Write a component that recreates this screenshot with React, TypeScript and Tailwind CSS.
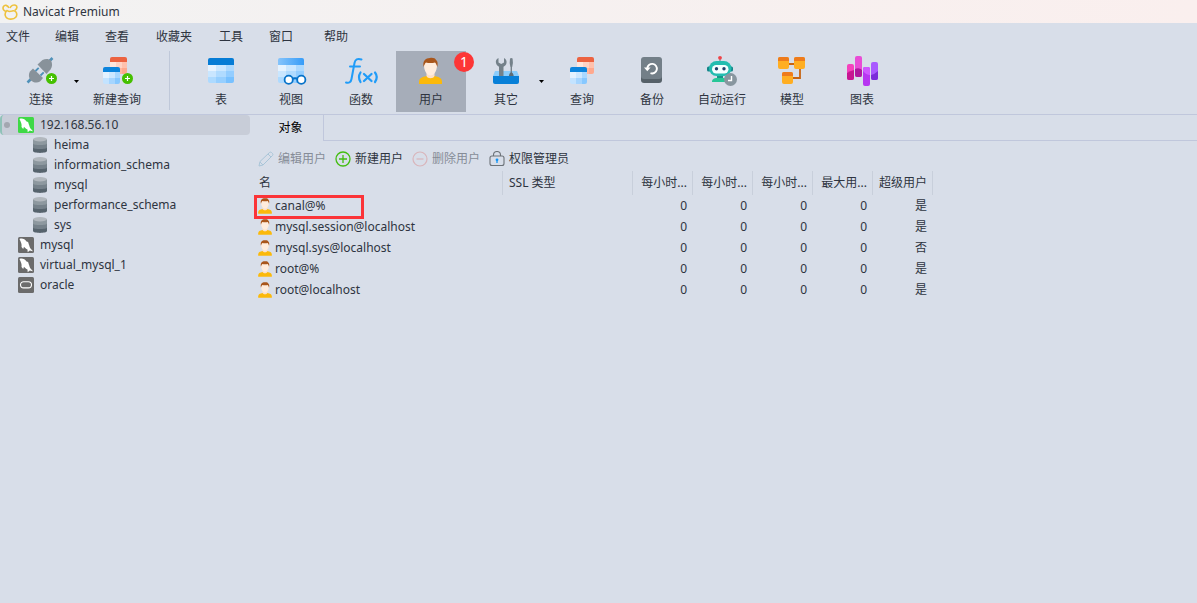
import React, { useState } from "react";
import type { ReactNode } from "react";

function MiniTable({ x, y, tone }: { x: number; y: number; tone: "red" | "blue" }) {
  const red = tone === "red";
  const cells = red
    ? ["#ffe6dd", "#ffd3c5", "#ffc1ad", "#ffd3c5", "#ffb7a0", "#ffa98e"]
    : ["#e3f2ff", "#cde8ff", "#a9d8ff", "#c3e3ff", "#a5d5ff", "#87c8ff"];
  return (
    <g transform={`translate(${x} ${y})`}>
      <path d="M0 5V2a2 2 0 0 1 2-2h13a2 2 0 0 1 2 2v3z" fill={red ? "#ec6341" : "#0c84dc"} />
      <path d="M0 5h6v6H0z" fill={cells[0]} />
      <path d="M6 5h6v6H6z" fill={cells[1]} />
      <path d="M12 5h5v6h-5z" fill={cells[2]} />
      <path d="M0 11h6v6H2a2 2 0 0 1-2-2z" fill={cells[3]} />
      <path d="M6 11h6v6H6z" fill={cells[4]} />
      <path d="M12 11h5v4a2 2 0 0 1-2 2h-3z" fill={cells[5]} />
    </g>
  );
}

function BigTable({ header }: { header: string }) {
  return (
    <g>
      <path d="M7 11V6a2 2 0 0 1 2-2h22a2 2 0 0 1 2 2v5z" fill={header} />
      <path d="M7 11h8v6H7z" fill="#e6f3ff" />
      <path d="M15 11h10v6H15z" fill="#cbe7ff" />
      <path d="M25 11h8v6h-8z" fill="#acd9ff" />
      <path d="M7 17h8v6H7z" fill="#c9e6ff" />
      <path d="M15 17h10v6H15z" fill="#b0dbff" />
      <path d="M25 17h8v6h-8z" fill="#93cdff" />
      <path d="M7 23h8v6H9a2 2 0 0 1-2-2z" fill="#addaff" />
      <path d="M15 23h10v6H15z" fill="#96cfff" />
      <path d="M25 23h8v4a2 2 0 0 1-2 2h-6z" fill="#78c1ff" />
    </g>
  );
}

function PlusBadge() {
  return (
    <g>
      <circle cx="30.5" cy="24.5" r="5.5" fill="#45c000" />
      <path d="M30.5 22v5M28 24.5h5" stroke="#fff" strokeWidth="1.2" />
    </g>
  );
}

function Svg({ children }: { children: ReactNode }) {
  return (
    <svg className="h-[34px] w-10 shrink-0" viewBox="0 0 40 34" aria-hidden="true">
      {children}
    </svg>
  );
}

const ConnectIcon = () => (
  <Svg>
    <path d="M6.500 28.500l5-5M26.500 9l5-5" stroke="#4f91b9" strokeWidth="2.600" />
    <path d="M9 17.500l3-3L22 24l-3 3.500c-3 2-7 1-9-1s-3-6-1-9z" fill="#88929a" />
    <path d="M16.500 10.500l5-4.500c3-1.500 6-1.500 8.500.5 1.500 3 1.500 6-.5 9l-4 4.500z" fill="#88929a" />
    <path d="M14.500 17l3.200-3.200M19.500 21.500l3.200-3.200" stroke="#4f91b9" strokeWidth="1.800" />
    <PlusBadge />
  </Svg>
);
const NewQueryIcon = () => (
  <Svg>
    <MiniTable x={13} y={3} tone="red" />
    <MiniTable x={6} y={13} tone="blue" />
    <PlusBadge />
  </Svg>
);
const TableIcon = () => (
  <Svg>
    <BigTable header="#067cd5" />
  </Svg>
);
const ViewIcon = () => (
  <Svg>
    <defs>
      <linearGradient id="view-header" x1="0" x2="1">
        <stop offset="0" stopColor="#86c4fb" />
        <stop offset="1" stopColor="#369cf8" />
      </linearGradient>
    </defs>
    <BigTable header="url(#view-header)" />
    <g fill="#fff" stroke="#0873c9" strokeWidth="1.800">
      <path d="M21 25q3-1.500 6 0" fill="none" />
      <circle cx="17.700" cy="25.700" r="4.100" />
      <circle cx="30.300" cy="25.700" r="4.100" />
    </g>
  </Svg>
);
const FunctionIcon = () => (
  <Svg>
    <g fill="none" stroke="#209cf8" strokeLinecap="round">
      <path d="M5 28.500c3 1 5-.5 5.500-3.500l3-16c.6-3.500 3-5 7-3.500M9 12.500h10" strokeWidth="2" />
      <path d="M19.500 18.500q-3 4.500 0 9.500M34 18.500q3.500 4.500 0 9.500" strokeWidth="2.200" />
      <path d="M23 20l7.500 7M30.500 20L23 27" strokeWidth="2.300" />
    </g>
  </Svg>
);
const Person = () => (
  <g>
    <path d="M8 30v-2c0-4 3-5 7.500-6h8c4.500 1 7.500 2 7.500 6v2z" fill="#fbb90a" />
    <path d="M15.500 19h8v3c-1 3-7 3-8 0z" fill="#fde0c8" />
    <path d="M13 11c0-6 13-6 13 0 0 6-3 10.500-6.500 10.500S13 17 13 11z" fill="#ffecdc" />
    <path d="M12.700 13c-1.500-6 2-9 6.300-9 3-.5 5.500.5 6 2 1.800 1 2 4 1.300 7-.6-2-1.300-3.500-2.300-4.500-3 1-7 .5-9 0-1 1-1.800 2.500-2.300 4.500z" fill="#a9561b" />
  </g>
);
const UserIcon = () => (
  <Svg>
    <Person />
  </Svg>
);
const OthersIcon = () => (
  <Svg>
    <path d="M9 17h22l2 5H7z" fill="#8accfb" />
    <path d="M12.500 4C10 5.200 9.500 7 10 9c.4 1.800 1.500 3 3 3.700V26h4.500V12.700C19 12 20.300 10.800 20.500 9c.4-2-.3-3.800-2.500-5v4.500l-2.800 1.500-2.700-1.500z" fill="#74818a" />
    <path d="M24 4.500q1.300-1 2.600 0 .8 4-.4 8.500h-1.800q-1.200-4.500-.4-8.500zM24.600 13h1.400v7h-1.400z" fill="#74818a" />
    <path d="M22.700 25c0-4 .8-6.500 2.600-6.500s2.600 2.500 2.600 6.500z" fill="#5f6c75" />
    <path d="M7 22h26v6a2 2 0 0 1-2 2H9a2 2 0 0 1-2-2z" fill="#0880d8" />
  </Svg>
);
const QueryIcon = () => (
  <Svg>
    <MiniTable x={15} y={3} tone="red" />
    <MiniTable x={8} y={13} tone="blue" />
  </Svg>
);
const BackupIcon = () => (
  <Svg>
    <rect x="9" y="5" width="21" height="24" rx="3" fill="#566169" />
    <rect x="9" y="3" width="21" height="22" rx="3" fill="#737f88" />
    <path d="M15.300 14.500A4.800 4.800 0 1 1 18.500 19.200" fill="none" stroke="#fff" strokeWidth="1.900" />
    <path d="M12 13.500h6.600L15.300 17.200z" fill="#fff" />
  </Svg>
);
const RobotIcon = () => (
  <Svg>
    <path d="M18 3v5" stroke="#72868e" strokeWidth="1.200" />
    <circle cx="18" cy="3.800" r="1.900" fill="#f04348" />
    <rect x="5" y="12.500" width="4" height="5" rx="1.500" fill="#15858a" />
    <rect x="27" y="12.500" width="4" height="5" rx="1.500" fill="#15858a" />
    <path d="M15 20h6v5h-6z" fill="#17968a" />
    <path d="M10 28c0-3 2-4 5-4h6c3 0 5 1 5 4z" fill="#27c697" />
    <rect x="7" y="7" width="22.500" height="15" rx="7.500" fill="#23bdb0" />
    <rect x="10" y="11" width="16.500" height="8.500" rx="4.200" fill="#f5ffff" />
    <circle cx="14.500" cy="14.800" r="1.700" fill="#21426c" />
    <circle cx="22" cy="14.800" r="1.700" fill="#21426c" />
    <circle cx="28.500" cy="25.500" r="6.500" fill="#88969f" />
    <path d="M29.500 22v4.500H26" fill="none" stroke="#fff" strokeWidth="1.400" />
  </Svg>
);
const ModelIcon = () => (
  <Svg>
    <path d="M16 10h6M28 14v10h-7" fill="none" stroke="#c76412" strokeWidth="1.800" />
    {[
      [6, 3],
      [22, 3],
      [10, 18],
    ].map(([x, y]) => (
      <g key={`${x}-${y}`} transform={`translate(${x} ${y})`}>
        <rect width="11" height="12" rx="2" fill="#ffae22" />
        <path d="M0 4V2a2 2 0 0 1 2-2h7a2 2 0 0 1 2 2v2z" fill="#ee7b1c" />
      </g>
    ))}
  </Svg>
);
const ChartIcon = () => (
  <Svg>
    <rect x="5" y="10" width="7" height="16" rx="2" fill="#f541bd" />
    <path d="M5 19q3-2 7-3v8a2 2 0 0 1-2 2H7a2 2 0 0 1-2-2z" fill="#c71592" />
    <rect x="13" y="2" width="7" height="21" rx="2" fill="#e94cd6" />
    <path d="M13 15q4-2 7 1v5a2 2 0 0 1-2 2h-3a2 2 0 0 1-2-2z" fill="#ae169e" />
    <rect x="21" y="13" width="7" height="19" rx="2" fill="#b735f1" />
    <path d="M21 17q3 4 7 4v-6a2 2 0 0 0-2-2h-3a2 2 0 0 0-2 2z" fill="#cf58ff" />
    <rect x="29" y="8" width="7" height="18" rx="2" fill="#a95aff" />
    <path d="M29 21q4-1 7-4v7a2 2 0 0 1-2 2h-3a2 2 0 0 1-2-2z" fill="#7b2dd9" />
  </Svg>
);

function ToolButton({ icon, label, width = "w-[70px]", active = false, badge }: {
  icon: ReactNode;
  label: string;
  width?: string;
  active?: boolean;
  badge?: string;
}) {
  return (
    <button
      type="button"
      aria-pressed={active}
      className={`relative flex h-[61px] shrink-0 flex-col items-center gap-1 pt-[3px] ${width} ${active ? "bg-[#a6adb9]" : ""}`}
    >
      {icon}
      <span className="whitespace-nowrap leading-4">{label}</span>
      {badge && (
        <span className="absolute -right-2 top-px flex size-5 items-center justify-center rounded-full bg-[#fd3636] text-sm leading-5 text-white">
          {badge}
        </span>
      )}
    </button>
  );
}

function DropArrow({ label }: { label: string }) {
  return (
    <button type="button" aria-label={label} className="flex h-[61px] w-[10px] shrink-0 items-center justify-center">
      <svg className="h-[3px] w-[5px]" viewBox="0 0 5 3" aria-hidden="true">
        <path d="M0 0h5L2.500 3z" fill="#000" />
      </svg>
    </button>
  );
}

const MySqlIcon = ({ on = false }: { on?: boolean }) => (
  <svg className="size-4 shrink-0" viewBox="0 0 16 16" aria-hidden="true">
    <rect width="16" height="16" rx="1.500" fill={on ? "#3fd946" : "#6b6b6b"} />
    <path d="M1.500 2C4 1 7 2 8.500 4.500c1.500.3 2.500 1.300 2 2.300.8 1.400 1 3.200 1.800 4.400l2.700 3-3.300-.6-2 1.600-.2-2.800C8 12 6.800 11 6 9.800L5.200 12 3.500 10C4 7.500 3 5 1.500 2z" fill="#fff" />
  </svg>
);
const OracleIcon = () => (
  <svg className="size-4 shrink-0" viewBox="0 0 16 16" aria-hidden="true">
    <rect width="16" height="16" rx="1.500" fill="#6b6b6b" />
    <rect x="2.500" y="4.700" width="11" height="6.200" rx="3.100" fill="none" stroke="#fff" strokeWidth="1.100" />
  </svg>
);
const DatabaseIcon = () => (
  <svg className="h-4 w-[14px] shrink-0" viewBox="0 0 14 16" aria-hidden="true">
    <path d="M0 2v12c0 2.500 14 2.500 14 0V2z" fill="#56636d" />
    <path d="M0 2v8.500c0 2 14 2 14 0V2z" fill="#75818a" />
    <path d="M0 2v4.500c0 2 14 2 14 0V2z" fill="#8d989f" />
    <ellipse cx="7" cy="2.300" rx="7" ry="2.200" fill="#b2b8be" />
  </svg>
);

function TreeItem({ name, icon, child = false, selected = false }: {
  name: string;
  icon: ReactNode;
  child?: boolean;
  selected?: boolean;
}) {
  return (
    <li>
      <button
        type="button"
        aria-current={selected}
        className={`flex h-5 w-full items-center whitespace-nowrap text-left leading-5 ${
          child ? "gap-[7px] pl-[33px]" : selected ? "gap-[6px] rounded-sm border-l-2 border-[#8fc2b8] bg-[#c8cdd8]" : "gap-[6px] pl-[18px]"
        }`}
      >
        {selected && (
          <span className="-mr-[6px] ml-[2px] flex w-[14px]">
            <span className="size-[6px] rounded-full bg-[#a3a7b0]" />
          </span>
        )}
        {icon}
        <span>{name}</span>
      </button>
    </li>
  );
}

const menus = [
  { label: "文件", width: "w-[49px]" },
  { label: "编辑", width: "w-[50px]" },
  { label: "查看", width: "w-[51px]" },
  { label: "收藏夹", width: "w-[63px]" },
  { label: "工具", width: "w-[50px]" },
  { label: "窗口", width: "w-[55px]" },
  { label: "帮助", width: "w-[50px]" },
];

const users = [
  { name: "canal@%", superUser: "是" },
  { name: "mysql.session@localhost", superUser: "是" },
  { name: "mysql.sys@localhost", superUser: "否" },
  { name: "root@%", superUser: "是" },
  { name: "root@localhost", superUser: "是" },
];

const limits = ["每小时...", "每小时...", "每小时...", "最大用..."];

export default function App() {
  const [current, setCurrent] = useState("canal@%");
  return (
    <div className="flex min-h-screen flex-col bg-[#d8dee9] font-['Noto_Sans','Noto_Sans_CJK_SC',sans-serif] text-xs text-[#2e3440]">
      <header className="flex h-[23px] items-center gap-[5px] bg-linear-to-r from-[#f2f2f2] to-[#faefee] pl-[2px]">
        <svg className="size-4 shrink-0" viewBox="0 0 16 16" aria-hidden="true">
          <g fill="none" stroke="#eec23e" strokeWidth="1.600">
            <path d="M4.500 7.500C1.500 7 .3 4.500 1.500 2.500s4-1.500 5.500 1.300" />
            <path d="M8 4c1-2.500 3.500-3.600 5.500-2.800s2 3.500-.7 5" />
            <path d="M5 6.500c-3 2.500-2.700 8.300 3.500 8.600 5 .2 7-3 6-6.200-.7-2-2.500-2.600-4.500-1.800-2 .7-3.500.6-5-.6z" />
          </g>
        </svg>
        <h1 className="leading-5">Navicat Premium</h1>
      </header>

      <nav className="flex h-7 items-center pl-[6px]" aria-label="菜单">
        {menus.map((m) => (
          <button key={m.label} type="button" className={`shrink-0 text-left leading-5 ${m.width}`}>
            {m.label}
          </button>
        ))}
      </nav>

      <div className="flex h-16 items-start border-b border-[#c0c7dc] pl-[11px]" role="toolbar">
        <ToolButton icon={<ConnectIcon />} label="连接" width="w-[60px]" />
        <DropArrow label="连接选项" />
        <span className="w-px shrink-0" />
        <ToolButton icon={<NewQueryIcon />} label="新建查询" />
        <span className="ml-[17px] mr-4 h-[59px] w-px shrink-0 bg-[#bfc8d9]" />
        <ToolButton icon={<TableIcon />} label="表" />
        <ToolButton icon={<ViewIcon />} label="视图" />
        <ToolButton icon={<FunctionIcon />} label="函数" />
        <ToolButton icon={<UserIcon />} label="用户" active badge="1" />
        <span className="w-[10px] shrink-0" />
        <ToolButton icon={<OthersIcon />} label="其它" width="w-[60px]" />
        <DropArrow label="其它选项" />
        <span className="w-px shrink-0" />
        <ToolButton icon={<QueryIcon />} label="查询" />
        <ToolButton icon={<BackupIcon />} label="备份" />
        <ToolButton icon={<RobotIcon />} label="自动运行" />
        <ToolButton icon={<ModelIcon />} label="模型" />
        <ToolButton icon={<ChartIcon />} label="图表" />
      </div>

      <div className="flex grow">
        <aside className="w-[250px] shrink-0">
          <ul>
            <TreeItem name="192.168.56.10" icon={<MySqlIcon on />} selected />
            {["heima", "information_schema", "mysql", "performance_schema", "sys"].map((db) => (
              <TreeItem key={db} name={db} icon={<DatabaseIcon />} child />
            ))}
            <TreeItem name="mysql" icon={<MySqlIcon />} />
            <TreeItem name="virtual_mysql_1" icon={<MySqlIcon />} />
            <TreeItem name="oracle" icon={<OracleIcon />} />
          </ul>
        </aside>

        <main className="min-w-0 grow">
          <div className="flex h-[26px]" role="tablist">
            <button type="button" role="tab" aria-selected="true" className="w-[74px] shrink-0 border-r border-[#c0c7dc] pl-2 text-black">
              对象
            </button>
            <div className="grow border-b border-[#c0c7dc]" />
          </div>

          <div className="flex h-[30px] items-center gap-[9px] whitespace-nowrap pl-2 pt-[5px]" role="toolbar">
            <button type="button" disabled className="flex items-center gap-1 text-[#868c97]">
              <svg className="size-4" viewBox="0 0 16 16" fill="none" stroke="#a9c5d8" aria-hidden="true">
                <path d="M1 15l1-4.500L11.500 1.500q1-.8 2 0l1 1q.8 1 0 2L5 14zM10 3l3 3M2 11l3 3" />
              </svg>
              编辑用户
            </button>
            <button type="button" className="flex items-center gap-1">
              <svg className="size-4" viewBox="0 0 16 16" fill="none" stroke="#43bd10" strokeWidth="1.300" aria-hidden="true">
                <circle cx="8" cy="8" r="7" />
                <path d="M8 4v8M4 8h8" />
              </svg>
              新建用户
            </button>
            <button type="button" disabled className="flex items-center gap-1 text-[#868c97]">
              <svg className="size-4" viewBox="0 0 16 16" fill="none" stroke="#d9b5bb" strokeWidth="1.200" aria-hidden="true">
                <circle cx="8" cy="8" r="7" />
                <path d="M4.500 8h7" />
              </svg>
              删除用户
            </button>
            <button type="button" className="flex items-center gap-1">
              <svg className="size-4" viewBox="0 0 16 16" fill="none" stroke="#6c7278" strokeWidth="1.100" aria-hidden="true">
                <rect x="1" y="5" width="14" height="9.500" rx="2" />
                <path d="M4.500 5V4a3.500 3.500 0 0 1 7 0v1" />
                <circle cx="8" cy="8.800" r="1.400" fill="#1495f5" stroke="none" />
                <path d="M8 9v3" stroke="#1495f5" strokeWidth="1.300" />
              </svg>
              权限管理员
            </button>
          </div>

          <table className="ml-[3px] w-[680px] table-fixed border-separate border-spacing-0 whitespace-nowrap">
            <colgroup>
              <col className="w-[250px]" />
              <col className="w-[130px]" />
              {limits.map((_, i) => (
                <col key={i} className="w-[60px]" />
              ))}
              <col className="w-[60px]" />
            </colgroup>
            <thead>
              <tr className="h-6">
                <th className="border-r border-[#c8cfdb] p-0 pl-[6px] text-left font-normal">名</th>
                <th className="border-r border-[#c8cfdb] p-0 pl-[6px] text-left font-normal">SSL 类型</th>
                {limits.map((t, i) => (
                  <th key={i} className="border-r border-[#c8cfdb] p-0 pr-[5px] text-right font-normal">{t}</th>
                ))}
                <th className="border-r border-[#c8cfdb] p-0 pr-[5px] text-right font-normal">超级用户</th>
              </tr>
            </thead>
            <tbody>
              {users.map((u) => (
                <tr key={u.name} className="h-[21px]">
                  <td className="p-0">
                    <button
                      type="button"
                      onClick={() => setCurrent(u.name)}
                      className="relative flex h-[21px] items-center gap-[2px] pl-1 leading-5"
                    >
                      <svg className="h-4 w-4 shrink-0" viewBox="6 4 27 26" aria-hidden="true">
                        <Person />
                      </svg>
                      {u.name}
                      {current === u.name && (
                        <span className="absolute left-px top-0 h-6 w-[110px] border-[3px] border-[#fb3438]" />
                      )}
                    </button>
                  </td>
                  <td className="p-0" />
                  {limits.map((_, i) => (
                    <td key={i} className="p-0 pr-[6px] text-right">0</td>
                  ))}
                  <td className="p-0 pr-[6px] text-right">{u.superUser}</td>
                </tr>
              ))}
            </tbody>
          </table>
        </main>
      </div>
    </div>
  );
}
